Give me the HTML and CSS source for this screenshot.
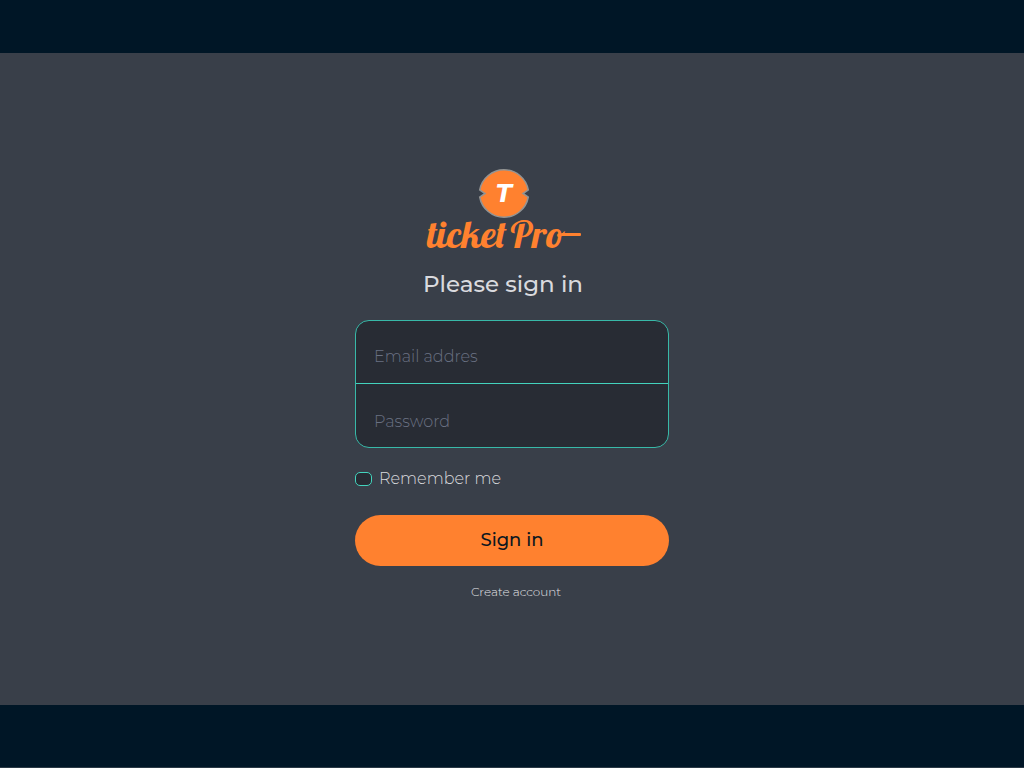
FILE: index.html
```html
<!DOCTYPE html>
<html lang="en">
<head>
<meta charset="utf-8">
<meta name="viewport" content="width=device-width, initial-scale=1">
<title>ticketPro – Sign in</title>
<link rel="stylesheet" href="styles.css">
</head>
<body>
<header class="bar bar-top"></header>
<main class="content">
  <form class="signin">
    <div class="brand">
      <svg class="brand-badge" viewBox="0 0 52 52" aria-hidden="true">
        <path class="badge-shape" d="M1.700 22A24.700 24.700 0 0 1 50.300 22L45 25.500 50.300 29A24.700 24.700 0 0 1 1.700 29L7 25.500Z"/>
        <text class="badge-letter" x="26" y="34" text-anchor="middle">T</text>
      </svg>
      <div class="wordmark"><span>ticket</span><span>Pro</span><i class="tail"></i></div>
    </div>
    <h1 class="title">Please sign in</h1>
    <div class="fields">
      <input class="field" type="email" placeholder="Email addres" aria-label="Email address">
      <input class="field field-last" type="password" placeholder="Password" aria-label="Password">
    </div>
    <label class="remember"><input class="check" type="checkbox"><span>Remember me</span></label>
    <button class="submit" type="submit">Sign in</button>
    <a class="create" href="#create">Create account</a>
  </form>
</main>
<footer class="bar bar-bottom"></footer>
</body>
</html>
```
FILE: styles.css
```css
* { box-sizing: border-box; }
body {
  margin: 0;
  min-height: 100vh;
  display: flex;
  flex-direction: column;
  background: #393f49;
  color: #d9dade;
  font-family: Montserrat, Inter, sans-serif;
}
.bar { background: #001626; }
.bar-top { height: 53px; }
.bar-bottom { height: 63px; border-bottom: 1px solid #2b3a46; }
.content {
  flex: 1;
  display: flex;
  justify-content: center;
  align-items: center;
  padding: 10px 16px 0;
}
.signin {
  width: 100%;
  max-width: 314px;
  display: flex;
  flex-direction: column;
}
.brand {
  display: flex;
  flex-direction: column;
  align-items: center;
  padding-right: 16px;
}
.brand-badge { width: 52px; height: 52px; }
.badge-shape { fill: #ff812f; stroke: #929494; stroke-width: 1.5; }
.badge-letter { fill: #fff; font: italic 700 24px "DejaVu Sans", sans-serif; }
.wordmark {
  display: flex;
  gap: 4px;
  height: 32px;
  color: #ff812f;
  font: 400 38px/28px Lobster, Lato, sans-serif;
}
.tail { width: 20px; height: 3px; margin: 13px 0 0 -8px; background: #ff812f; border-radius: 1px; }
.title {
  margin: 16px 18px 20px 0;
  font-size: 23px;
  line-height: 32px;
  font-weight: 500;
  text-align: center;
}
.fields {
  display: flex;
  flex-direction: column;
  border: 1px solid #38b9a8;
  border-radius: 14px;
  background: #282c34;
}
.field {
  width: 100%;
  height: 63px;
  padding: 9px 18px 0;
  border: 0;
  border-bottom: 1px solid #43d3bd;
  background: transparent;
  color: #d9dade;
  font: 300 16px Montserrat, Inter, sans-serif;
}
.field-last { padding-top: 12px; border-bottom: 0; }
.field:focus { outline: 0; }
.field::placeholder { color: #6a7183; opacity: 1; }
.remember {
  display: flex;
  align-items: center;
  gap: 7px;
  margin-top: 19px;
  font-size: 16px;
  line-height: 24px;
  font-weight: 300;
}
.check {
  appearance: none;
  width: 17px;
  height: 14px;
  margin: 0;
  border: 1px solid #43d3bd;
  border-radius: 5px;
  background: #282c34;
}
.check:checked { background: #43d3bd; }
.submit {
  height: 51px;
  margin-top: 24px;
  padding: 0 0 2px;
  border: 0;
  border-radius: 26px;
  background: #ff812f;
  color: #0c1720;
  font: 500 18px Montserrat, Inter, sans-serif;
}
.create {
  align-self: center;
  margin-top: 18px;
  padding-left: 8px;
  color: #e2e3e6;
  font-size: 12px;
  line-height: 16px;
  font-weight: 300;
  text-decoration: none;
}
```
